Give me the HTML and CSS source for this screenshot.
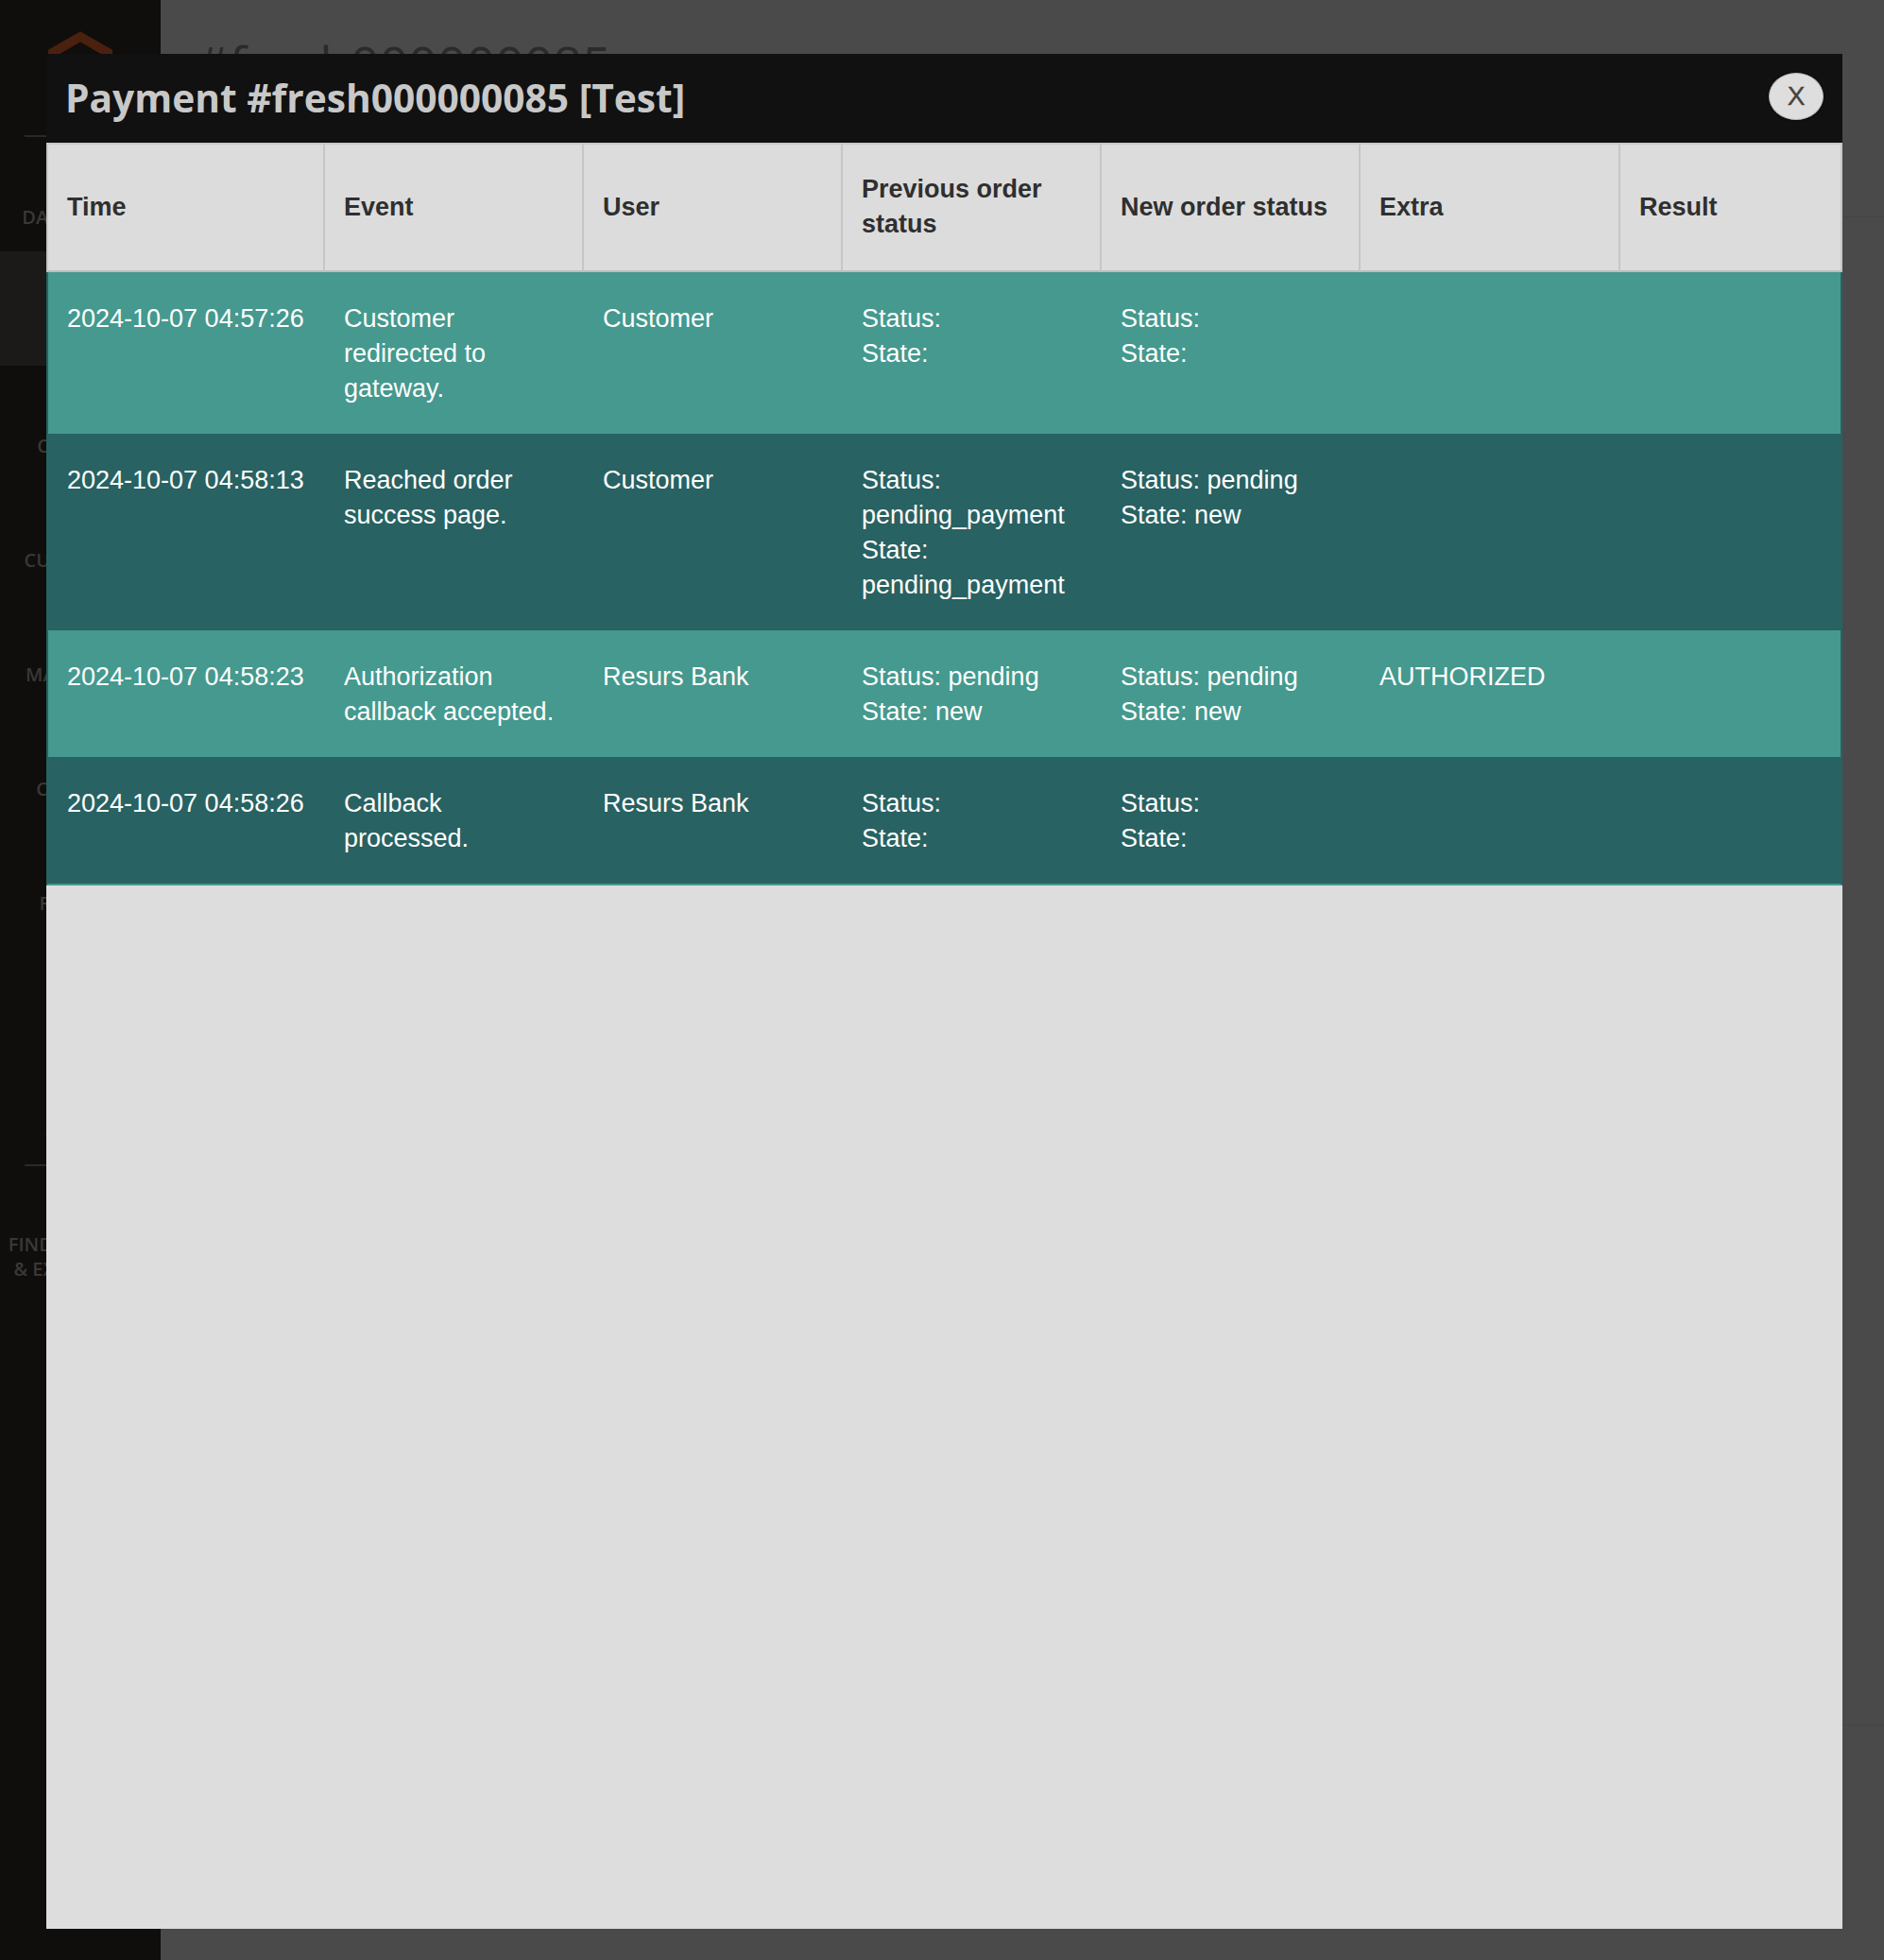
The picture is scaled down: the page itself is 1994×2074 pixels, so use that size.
FILE: index.html
```html
<!DOCTYPE html>
<html lang="en">
<head>
<meta charset="utf-8">
<title>Payment #fresh000000085 [Test]</title>
<link rel="stylesheet" href="styles.css">
</head>
<body>
<div class="app">
  <aside class="sidebar">
    <div class="logo">
      <svg class="logo-mark" viewBox="1.609 0 20.782 24" width="68" height="79" aria-hidden="true">
        <path d="M12 24l-4.455-2.572v-12l2.97-1.715v12.001L12 20.57l1.485-.856V7.713l2.971 1.715v12L12 24zM22.391 6v12l-2.969 1.714V7.713L12 3.43 4.574 7.713v12.001L1.609 18V6L12 0l10.391 6z"/>
      </svg>
    </div>
    <nav class="menu">
      <div class="menu-item"><span class="menu-label">Dashboard</span></div>
      <div class="menu-item is-active"><span class="menu-label">Sales</span></div>
      <div class="menu-item"><span class="menu-label">Catalog</span></div>
      <div class="menu-item"><span class="menu-label">Customers</span></div>
      <div class="menu-item"><span class="menu-label">Marketing</span></div>
      <div class="menu-item"><span class="menu-label">Content</span></div>
      <div class="menu-item"><span class="menu-label">Reports</span></div>
      <div class="menu-item"><span class="menu-label">Stores</span></div>
      <div class="menu-item"><span class="menu-label">System</span></div>
      <div class="menu-item menu-partners"><span class="menu-label">Find Partners<br>&amp; Extensions</span></div>
    </nav>
  </aside>
  <main class="main">
    <header class="page-header">
      <h1 class="page-title">#fresh000000085</h1>
    </header>
    <section class="page-body"></section>
  </main>
</div>

<div class="modal" role="dialog" aria-labelledby="modal-title">
  <div class="modal-header">
    <h2 class="modal-title" id="modal-title">Payment #fresh000000085 [Test]</h2>
    <button class="modal-close" type="button">X</button>
  </div>
  <div class="modal-body">
    <table class="history">
      <colgroup>
        <col class="w-time">
        <col class="w-std">
        <col class="w-std">
        <col class="w-std">
        <col class="w-std">
        <col class="w-extra">
        <col>
      </colgroup>
      <thead>
        <tr>
          <th>Time</th>
          <th>Event</th>
          <th>User</th>
          <th>Previous order status</th>
          <th>New order status</th>
          <th>Extra</th>
          <th>Result</th>
        </tr>
      </thead>
      <tbody>
        <tr class="row-light">
          <td class="cell-time">2024-10-07 04:57:26</td>
          <td>Customer redirected to gateway.</td>
          <td>Customer</td>
          <td>Status: <br>State: </td>
          <td>Status: <br>State: </td>
          <td></td>
          <td></td>
        </tr>
        <tr class="row-dark">
          <td class="cell-time">2024-10-07 04:58:13</td>
          <td>Reached order success page.</td>
          <td>Customer</td>
          <td>Status: pending_payment<br>State: pending_payment</td>
          <td>Status: pending<br>State: new</td>
          <td></td>
          <td></td>
        </tr>
        <tr class="row-light">
          <td class="cell-time">2024-10-07 04:58:23</td>
          <td>Authorization callback accepted.</td>
          <td>Resurs Bank</td>
          <td>Status: pending<br>State: new</td>
          <td>Status: pending<br>State: new</td>
          <td>AUTHORIZED</td>
          <td></td>
        </tr>
        <tr class="row-dark row-last">
          <td class="cell-time">2024-10-07 04:58:26</td>
          <td>Callback processed.</td>
          <td>Resurs Bank</td>
          <td>Status: <br>State: </td>
          <td>Status: <br>State: </td>
          <td></td>
          <td></td>
        </tr>
      </tbody>
    </table>
  </div>
</div>
</body>
</html>
```

FILE: styles.css
```css
html, body {
  margin: 0;
  padding: 0;
  width: 1994px;
  height: 2074px;
  overflow: hidden;
  background: #4a4a4a;
}

.app {
  display: grid;
  grid-template-columns: 170px 1fr;
  height: 2074px;
}

/* ---------- sidebar (dimmed behind overlay) ---------- */
.sidebar {
  background: #0f0e0c;
  display: flex;
  flex-direction: column;
}

.logo {
  height: 145px;
  padding-top: 33px;
  box-sizing: border-box;
  display: flex;
  justify-content: center;
  border-bottom: 2px solid #2a2928;
  margin: 0 26px;
}

.logo-mark {
  fill: #4a200e;
  display: block;
}

.menu {
  display: flex;
  flex-direction: column;
}

.menu-item {
  height: 121px;
  display: flex;
  flex-direction: column;
  justify-content: flex-end;
  align-items: center;
  padding-bottom: 25px;
  box-sizing: border-box;
}

.menu-item.is-active {
  background: #1b1a19;
}

.menu-label {
  font-family: "Open Sans", "Liberation Sans", sans-serif;
  font-weight: 600;
  font-size: 20px;
  line-height: 22px;
  text-transform: uppercase;
  color: #3a3836;
  text-align: center;
  white-space: nowrap;
}

.menu-item:nth-child(9) {
  border-bottom: 2px solid #2a2928;
  margin: 0 26px;
}

.menu-partners {
  height: auto;
  justify-content: flex-start;
  padding-top: 70px;
}

.menu-partners .menu-label {
  line-height: 26px;
}

/* ---------- main page (behind overlay) ---------- */
.main {
  background: #4a4a4a;
  display: flex;
  flex-direction: column;
}

.page-header {
  height: 229px;
  border-bottom: 1px solid #444444;
  padding-left: 38px;
}

.page-title {
  margin: 0;
  padding-top: 42px;
  font-family: "Open Sans", "Liberation Sans", sans-serif;
  font-weight: 400;
  font-size: 53.6px;
  line-height: 52px;
  color: #2b2b2b;
}

.page-body {
  height: 1595px;
  border-bottom: 1px solid #444444;
}

/* ---------- modal ---------- */
.modal {
  position: absolute;
  left: 49px;
  top: 57px;
  width: 1901px;
  height: 1984px;
  background: #dddddd;
  display: flex;
  flex-direction: column;
}

.modal-header {
  height: 94px;
  background: #111111;
  display: flex;
  align-items: flex-start;
  justify-content: space-between;
  padding: 0 20px 0 20px;
  box-sizing: border-box;
}

.modal-title {
  margin: 0;
  font-family: "Open Sans", "Liberation Sans", sans-serif;
  font-weight: 700;
  font-size: 40.7px;
  line-height: 92px;
  color: #c8c8c8;
}

.modal-close {
  margin-top: 20px;
  width: 58px;
  height: 50px;
  border-radius: 50%;
  border: 1px solid #b9b9b9;
  background: #dedede;
  box-shadow: 0 1px 2px rgba(0, 0, 0, 0.5);
  font-family: "Liberation Sans", Arial, sans-serif;
  font-size: 28px;
  line-height: 48px;
  color: #48423d;
  padding: 0;
  text-align: center;
  -webkit-text-stroke: 0.4px #48423d;
}

.modal-body {
  flex: 1;
}

/* ---------- table ---------- */
.history {
  width: 100%;
  table-layout: fixed;
  border-collapse: separate;
  border-spacing: 0;
  font-family: "Liberation Sans", Arial, Helvetica, sans-serif;
  font-size: 27px;
  line-height: 37px;
}

.w-time { width: 295px; }
.w-std { width: 274px; }
.w-extra { width: 275px; }

.history th {
  background: #dcdcdc;
  color: #2f2f2f;
  font-weight: 700;
  text-align: left;
  vertical-align: middle;
  padding: 29px 20px 30px 20px;
  border-top: 2px solid #c9c9c9;
  border-right: 2px solid #c6c6c6;
  border-bottom: 2px solid #bdbdbd;
}

.history th:first-child {
  border-left: 2px solid #c6c6c6;
}

.history td {
  color: #ffffff;
  vertical-align: top;
  text-align: left;
  padding: 31px 20px 29px 20px;
}

.history td.cell-time {
  white-space: nowrap;
}

.history td:first-child {
  border-left: 2px solid #286262;
}

.history td:last-child {
  border-right: 2px solid #286262;
}

.row-light td {
  background: #45998e;
}

.row-dark td {
  background: #286262;
}

.row-last td {
  border-bottom: 2px solid #45998e;
}
```
